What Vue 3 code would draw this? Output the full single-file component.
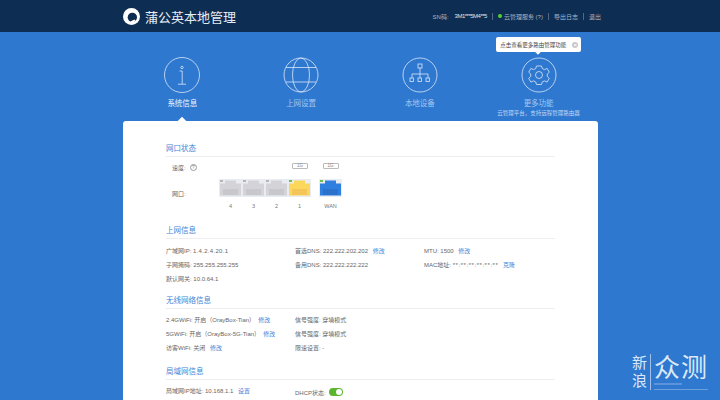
<template>
  <div class="page">
    <!-- header -->
    <header class="top">
      <div class="inner top-inner">
        <div class="brand">
          <svg class="logo" viewBox="0 0 20 20">
            <circle cx="10" cy="10" r="10" fill="#fff" />
            <circle cx="11" cy="11" r="5.500" fill="#0e2d52" />
            <path d="M8 16.500c2 .8 5 .4 7-1.500l-1.500-1.500c-1.500 1-3.500 1.500-5.500 3z" fill="#fff" />
          </svg>
          <span class="brand-name">蒲公英本地管理</span>
        </div>
        <div class="top-links">
          <span>SN码:</span>
          <span class="sn">3M1***5M4**5</span>
          <i class="sep"></i>
          <span class="cloud"><b class="dot"></b>云管理服务 (?)</span>
          <i class="sep"></i>
          <span>导出日志</span>
          <i class="sep"></i>
          <span>退出</span>
        </div>
      </div>
    </header>

    <div class="inner main">
      <!-- nav tabs -->
      <nav class="tabs">
        <div class="tab active">
          <svg viewBox="0 0 36 36" class="tab-icon">
            <circle cx="18" cy="18" r="17.500" />
            <circle cx="18" cy="10.500" r="1.200" />
            <path d="M15.500 14h2.700v13M14 27.200h8" />
          </svg>
          <span>系统信息</span>
        </div>
        <div class="tab">
          <svg viewBox="0 0 36 36" class="tab-icon">
            <circle cx="18" cy="18" r="17" />
            <ellipse cx="18" cy="18" rx="8.500" ry="17" />
            <path d="M3 10.500h30M3 25h30" />
          </svg>
          <span>上网设置</span>
        </div>
        <div class="tab">
          <svg viewBox="0 0 36 36" class="tab-icon">
            <circle cx="18" cy="18" r="17" />
            <rect x="16" y="7" width="4" height="4" />
            <rect x="8" y="21" width="3.500" height="3.500" />
            <rect x="16" y="21" width="3.500" height="3.500" />
            <rect x="24" y="21" width="3.500" height="3.500" />
            <path d="M18 11v10M10 21v-4h16v4" />
          </svg>
          <span>本地设备</span>
        </div>
        <div class="tab">
          <svg viewBox="0 0 36 36" class="tab-icon">
            <circle cx="18" cy="18" r="17" />
            <path d="M15.500 9h5l.8 2.600 2.300 1 2.500-1.200 2.200 3.800-2 1.800v2.500l2 1.800-2.200 3.800-2.500-1.200-2.300 1-.8 2.600h-5l-.8-2.600-2.300-1-2.500 1.200-2.200-3.800 2-1.800v-2.500l-2-1.800 2.200-3.800 2.500 1.200 2.300-1z" />
            <circle cx="18" cy="18" r="3.500" />
          </svg>
          <span>更多功能</span>
          <small>云管理平台，支持远程管理路由器</small>
          <div class="tip">
            点击查看更多路由管理功能
            <b class="tip-close">×</b>
          </div>
        </div>
      </nav>

      <!-- card -->
      <section class="card">
        <h3>网口状态</h3>
        <div class="ports-wrap">
          <div class="port-labels">
            <div class="lab-speed">速度: <b class="q">?</b></div>
            <div class="lab-port">网口:</div>
          </div>
          <div class="port-group lan">
            <div class="speeds"><em>1G</em></div>
            <div class="port-bg">
              <svg v-for="p in lanPorts" :key="p.name" viewBox="0 0 23 18" class="port">
                <path :d="portPath" :fill="p.color" />
                <rect x="4" y="10" width="15" height="6" :fill="p.inner" />
                <rect x="1" y="1" width="3" height="2" :fill="p.led" />
              </svg>
            </div>
            <div class="names">
              <span v-for="p in lanPorts" :key="p.name">{{ p.name }}</span>
            </div>
          </div>
          <div class="port-group wan">
            <div class="speeds"><em>1G</em></div>
            <div class="port-bg">
              <svg viewBox="0 0 23 18" class="port">
                <path :d="portPath" fill="#2f7fe0" />
                <rect x="4" y="10" width="15" height="6" fill="#2a72cc" />
                <rect x="1" y="1" width="3" height="2" fill="#6fc04a" />
              </svg>
            </div>
            <div class="names"><span>WAN</span></div>
          </div>
        </div>

        <h3 class="net">上网信息</h3>
        <div class="grid net-grid">
          <div>广域网IP: <span class="mask">1.4.2.4.20.1</span></div>
          <div>首选DNS: 222.222.202.202 <a>修改</a></div>
          <div>MTU: 1500 <a>修改</a></div>
          <div>子网掩码: 255.255.255.255</div>
          <div>备用DNS: 222.222.222.222</div>
          <div>MAC地址: <span class="mask wide">**:**:**:**:**:**</span> <a>克隆</a></div>
          <div>默认网关: 10.0.64.1</div>
        </div>

        <h3 class="wifi">无线网络信息</h3>
        <div class="grid">
          <div>2.4GWiFi: 开启（OrayBox-Tian）<a>修改</a></div>
          <div>信号强度: 穿墙模式</div>
          <div></div>
          <div>5GWiFi: 开启（OrayBox-5G-Tian）<a>修改</a></div>
          <div>信号强度: 穿墙模式</div>
          <div></div>
          <div>访客WiFi: 关闭 <a>修改</a></div>
          <div>限速设置: -</div>
        </div>

        <h3 class="lan-title">局域网信息</h3>
        <div class="grid">
          <div>局域网IP地址: 10.168.1.1 <a>设置</a></div>
          <div class="dhcp">DHCP状态: <b class="switch"></b></div>
        </div>
      </section>
    </div>

    <!-- watermark -->
    <div class="mark">
      <div class="mark-small">新<br />浪</div>
      <div class="mark-right">
        <div class="mark-big">众测</div>
        <i class="bar short"></i>
        <i class="bar"></i>
      </div>
    </div>
  </div>
</template>

<script setup>
const portPath = 'M1 4.500h5V1.500h11v3h5V16.500H1z'

const lanPorts = [
  { name: '4', color: '#d4d4d8', inner: '#c8c8cc', led: '#b5b5b8' },
  { name: '3', color: '#d4d4d8', inner: '#c8c8cc', led: '#b5b5b8' },
  { name: '2', color: '#d4d4d8', inner: '#c8c8cc', led: '#b5b5b8' },
  { name: '1', color: '#fbd85c', inner: '#f4c65a', led: '#6fc04a' }
]
</script>

<style>
html,
body {
  margin: 0;
  height: 400px;
  overflow: hidden;
}
</style>

<style scoped>
* {
  box-sizing: border-box;
}

.page {
  position: relative;
  width: 720px;
  height: 400px;
  overflow: hidden;
  background-color: #2f78d0;
  font-family: "Liberation Sans", "Noto Sans CJK SC", sans-serif;
  color: #666;
}

.inner {
  width: 475px;
  margin-left: 123px;
}

/* header */
.top {
  height: 32px;
  background-color: #0e2d52;
}

.top-inner {
  width: 478px;
  height: 32px;
  display: flex;
  align-items: center;
  justify-content: space-between;
}

.brand {
  display: flex;
  align-items: center;
  gap: 5px;
}

.logo {
  width: 17px;
  height: 17px;
}

.brand-name {
  font-size: 13px;
  color: #e6ecf3;
}

.top-links {
  display: flex;
  align-items: center;
  font-size: 6px;
  color: #a9b6c6;
}

.sn {
  margin-left: 6px;
  letter-spacing: -0.5px;
  color: #dfe5ec;
}

.sep {
  width: 1px;
  height: 7px;
  margin: 0 5px;
  background-color: #51688a;
}

.cloud {
  display: flex;
  align-items: center;
}

.dot {
  width: 4px;
  height: 4px;
  margin-right: 2px;
  border-radius: 50%;
  background-color: #4fd32a;
}

/* tabs */
.tabs {
  display: grid;
  grid-template-columns: repeat(4, 1fr);
  height: 89px;
}

.tab {
  position: relative;
  display: flex;
  flex-direction: column;
  align-items: center;
  padding-top: 25px;
  font-size: 7.500px;
  color: #a4c6ee;
}

.tab-icon {
  width: 36px;
  height: 36px;
  margin-bottom: 4px;
  fill: none;
  stroke: #dbe7f6;
  stroke-width: 0.8;
}

.tab.active {
  color: #f1f6fc;
}

.tab.active::after {
  content: "";
  position: absolute;
  left: 50%;
  bottom: -3px;
  width: 6px;
  height: 6px;
  margin-left: -3px;
  background-color: #fff;
  transform: rotate(45deg);
}

.tab small {
  margin-top: 1px;
  font-size: 5.500px;
  color: #c2d8f3;
  white-space: nowrap;
}

.tip {
  position: absolute;
  top: 5px;
  left: 17px;
  display: flex;
  align-items: center;
  justify-content: space-between;
  width: 85px;
  height: 15px;
  padding: 0 3px 0 4px;
  border-radius: 2px;
  background-color: #fff;
  color: #444;
  font-size: 5.500px;
  white-space: nowrap;
}

.tip::after {
  content: "";
  position: absolute;
  left: 40px;
  bottom: -2px;
  width: 4px;
  height: 4px;
  background-color: #fff;
  transform: rotate(45deg);
}

.tip-close {
  width: 6px;
  height: 6px;
  border-radius: 50%;
  background-color: #c8c8c8;
  color: #fff;
  font-size: 5px;
  line-height: 6px;
  text-align: center;
}

/* card */
.card {
  height: 400px;
  padding: 22px 43px 0;
  border-radius: 3px 3px 0 0;
  background-color: #fff;
  font-size: 6px;
}

h3 {
  margin: 0 0 3px;
  padding: 1px 0 3px;
  height: 14px;
  border-bottom: 1px solid #eeeeee;
  color: #3f85d8;
  font-size: 7.500px;
  font-weight: normal;
  line-height: 9px;
}

.net {
  margin-top: 11px;
}

.net-grid {
  margin-top: 4px;
}

.wifi {
  margin-top: 10px;
}

.lan-title {
  margin-top: 12px;
}

a {
  margin-left: 3px;
  color: #3f85d8;
}

/* ports */
.ports-wrap {
  display: flex;
  height: 51px;
  margin-top: 6px;
}

.port-labels {
  width: 53px;
  padding-left: 6px;
}

.lab-speed {
  display: flex;
  align-items: center;
  gap: 4px;
  height: 8px;
}

.lab-port {
  margin-top: 18px;
}

.q {
  width: 7px;
  height: 7px;
  border: 1px solid #999;
  border-radius: 50%;
  color: #777;
  font-size: 4.500px;
  font-weight: normal;
  line-height: 5px;
  text-align: center;
}

.port-group {
  display: flex;
  flex-direction: column;
}

.wan {
  margin-left: 8px;
}

.speeds {
  display: flex;
  height: 16px;
}

.lan .speeds {
  justify-content: flex-end;
  padding-right: 3px;
}

.speeds em {
  display: block;
  width: 16px;
  height: 6px;
  border: 1px solid #bbb;
  border-radius: 1px;
  margin: 0 auto;
  color: #888;
  font-size: 4.500px;
  font-style: normal;
  line-height: 4px;
  text-align: center;
}

.lan .speeds em {
  margin: 0;
}

.port-bg {
  display: flex;
  height: 18px;
  background-color: #e9edf3;
}

.port {
  display: block;
  width: 23px;
  height: 18px;
}

.names {
  display: flex;
  margin-top: 6px;
  color: #777;
  font-size: 5.500px;
}

.names span {
  width: 23px;
  text-align: center;
}

/* info rows */
.grid {
  display: grid;
  grid-template-columns: 129px 129px 1fr;
  grid-auto-rows: 14px;
  align-items: center;
  white-space: nowrap;
}

.mask {
  letter-spacing: 0.3px;
}

.mask.wide {
  letter-spacing: 0.55px;
}

.dhcp {
  display: flex;
  align-items: center;
  gap: 3px;
  margin-top: 4px;
}

.switch {
  position: relative;
  width: 14px;
  height: 8px;
  border-radius: 4px;
  background-color: #5cb531;
}

.switch::after {
  content: "";
  position: absolute;
  top: 1px;
  right: 1px;
  width: 6px;
  height: 6px;
  border-radius: 50%;
  background-color: #fff;
}

/* watermark */
.mark {
  position: absolute;
  left: 632px;
  top: 354px;
  display: flex;
  gap: 3px;
  color: #dce8f7;
}

.mark-small {
  padding-right: 3px;
  border-right: 1px solid #9fc0ea;
  font-size: 15px;
  line-height: 18px;
}

.mark-right {
  display: flex;
  flex-direction: column;
}

.mark-big {
  height: 29px;
  font-size: 26px;
  line-height: 29px;
  letter-spacing: 1px;
}

.bar {
  display: block;
  width: 54px;
  height: 1px;
  margin-top: 4px;
  background-color: #6d9fdd;
}

.bar.short {
  width: 28px;
  margin-top: 0;
  height: 2px;
  background-color: #5d93d8;
}
</style>
